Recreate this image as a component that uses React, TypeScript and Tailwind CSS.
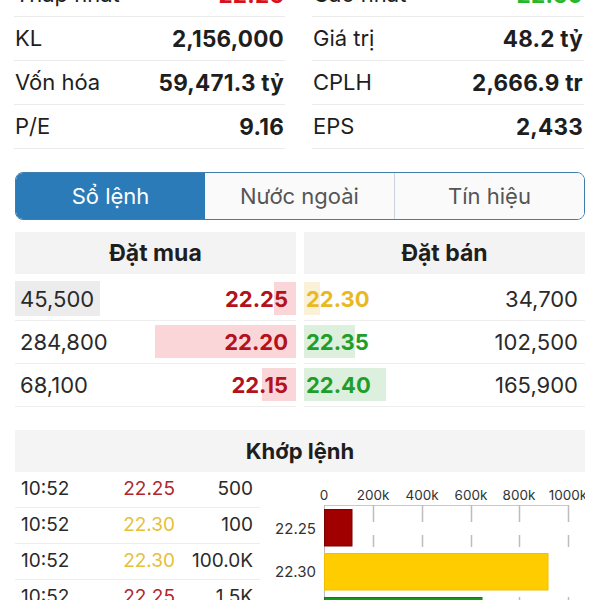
import React from "react";

const font = { fontFamily: 'Inter, "Noto Sans", sans-serif' };

type Stat = { label: string; value: string; color?: string };

const leftStats: Stat[] = [
  { label: "Thấp nhất", value: "22.25", color: "text-[#d9111b]" },
  { label: "KL", value: "2,156,000" },
  { label: "Vốn hóa", value: "59,471.3 tỷ" },
  { label: "P/E", value: "9.16" },
];
const rightStats: Stat[] = [
  { label: "Cao nhất", value: "22.50", color: "text-[#25b82a]" },
  { label: "Giá trị", value: "48.2 tỷ" },
  { label: "CPLH", value: "2,666.9 tr" },
  { label: "EPS", value: "2,433" },
];

function StatCol({ items }: { items: Stat[] }) {
  return (
    <div className="flex flex-col">
      {items.map((s) => (
        <div
          key={s.label}
          className="h-[44px] flex items-center justify-between border-b border-[#ebebeb] pl-[1px] pr-[1px]"
        >
          <span className="text-[22px] text-[#1e1e1e]">{s.label}</span>
          <span className={`text-[22.5px] font-bold tracking-[0.01em] ${s.color ?? "text-[#1e1e1e]"}`}>{s.value}</span>
        </div>
      ))}
    </div>
  );
}

const buys = [
  { vol: "45,500", price: "22.25", bar: 22, flash: true },
  { vol: "284,800", price: "22.20", bar: 141, flash: false },
  { vol: "68,100", price: "22.15", bar: 34, flash: false },
];
const sells = [
  { price: "22.30", vol: "34,700", bar: 16, text: "text-[#e8b923]", bg: "bg-[#fbf0d8]" },
  { price: "22.35", vol: "102,500", bar: 51, text: "text-[#1f9e2b]", bg: "bg-[#ddf0de]" },
  { price: "22.40", vol: "165,900", bar: 82, text: "text-[#1f9e2b]", bg: "bg-[#ddf0de]" },
];

const trades = [
  { t: "10:52", p: "22.25", v: "500", c: "text-[#b0262e]" },
  { t: "10:52", p: "22.30", v: "100", c: "text-[#e6c03a]" },
  { t: "10:52", p: "22.30", v: "100.0K", c: "text-[#e6c03a]" },
  { t: "10:52", p: "22.25", v: "1.5K", c: "text-[#b0262e]" },
];

function Chart() {
  const ticks = [64, 113, 162, 211, 259, 308];
  const labels = ["0", "200k", "400k", "600k", "800k", "1000k"];
  return (
    <svg width="325" height="130" viewBox="0 0 325 130" className="block">
      <g fontFamily='Inter, "Noto Sans", sans-serif' fill="#333">
        {labels.map((l, i) => (
          <text key={l} x={ticks[i]} y={28} fontSize="13.5" textAnchor="middle">
            {l}
          </text>
        ))}
        <text x={56} y={62} fontSize="15" textAnchor="end">22.25</text>
        <text x={56} y={105} fontSize="15" textAnchor="end">22.30</text>
      </g>
      <line x1={64} y1={33.5} x2={308} y2={33.5} stroke="#c8c8c8" strokeWidth="1" />
      {ticks.slice(1).map((x) => (
        <line
          key={x}
          x1={x + 0.5}
          y1={33}
          x2={x + 0.5}
          y2={130}
          stroke="#bdbdbd"
          strokeWidth="1.5"
          strokeDasharray="17 13 12 50"
        />
      ))}
      <line x1={64.5} y1={33} x2={64.5} y2={130} stroke="#bdbdbd" strokeWidth="1" />
      <rect x={64.5} y={37.5} width={27.5} height={36.5} fill="#a10000" stroke="#7c0000" strokeWidth="1" />
      <rect x={64.5} y={81.5} width={223.5} height={36.5} fill="#ffcc00" stroke="#f0c000" strokeWidth="1" />
      <rect x={64.5} y={125.5} width={157.5} height={20} fill="#149a14" stroke="#0c800c" strokeWidth="1" />
    </svg>
  );
}

export default function App() {
  return (
    <div className="w-[600px] h-[600px] overflow-hidden bg-white" style={font}>
      <div className="-mt-[27px] pl-[14px] grid grid-cols-[271px_272px] gap-x-[27px]">
        <StatCol items={leftStats} />
        <StatCol items={rightStats} />
      </div>

      {/* segmented control */}
      <div className="mt-[23px] ml-[15px] w-[570px] h-[48px] flex rounded-[8px] border border-[#3f7fae] overflow-hidden">
        <div className="w-[189px] bg-[#2b7bb9] flex items-center justify-center text-[22px] text-white">
          Sổ lệnh
        </div>
        <div className="w-[190px] bg-[#fafafa] border-r border-[#c9d2da] flex items-center justify-center text-[22px] text-[#555]">
          Nước ngoài
        </div>
        <div className="flex-1 bg-[#fafafa] flex items-center justify-center text-[22px] text-[#555]">
          Tín hiệu
        </div>
      </div>

      {/* order book */}
      <div className="mt-[12px] ml-[15px] w-[570px] grid grid-cols-[281px_281px] gap-x-[8px]">
        <div>
          <div className="h-[42px] bg-[#f3f3f3] flex items-center justify-center text-[23px] font-bold text-[#1e1e1e]">
            Đặt mua
          </div>
          <div className="mt-[4px]">
            {buys.map((b) => (
              <div key={b.price} className="relative h-[43px] border-b border-[#eeeeee]">
                {b.flash && (
                  <div className="absolute left-0 top-[3px] bottom-[4px] w-[85px] bg-[#ececec]" />
                )}
                <div
                  className="absolute right-0 top-[4px] bottom-[5px] bg-[#fbd6d9]"
                  style={{ width: b.bar }}
                />
                <div className="relative h-full flex items-center justify-between pl-[5px] pr-[8px]">
                  <span className="text-[22px] text-[#2a2a2a]">{b.vol}</span>
                  <span className="text-[22px] font-bold text-[#b3121c]">{b.price}</span>
                </div>
              </div>
            ))}
          </div>
        </div>
        <div>
          <div className="h-[42px] bg-[#f3f3f3] flex items-center justify-center text-[23px] font-bold text-[#1e1e1e]">
            Đặt bán
          </div>
          <div className="mt-[4px]">
            {sells.map((s) => (
              <div key={s.price} className="relative h-[43px] border-b border-[#eeeeee]">
                <div
                  className={`absolute left-0 top-[4px] bottom-[5px] ${s.bg}`}
                  style={{ width: s.bar }}
                />
                <div className="relative h-full flex items-center justify-between pl-[2px] pr-[7px]">
                  <span className={`text-[22px] font-bold ${s.text}`}>{s.price}</span>
                  <span className="text-[22px] text-[#2a2a2a]">{s.vol}</span>
                </div>
              </div>
            ))}
          </div>
        </div>
      </div>

      {/* matched orders */}
      <div className="mt-[23px] ml-[15px] w-[570px] h-[42px] bg-[#f4f4f4] flex items-center justify-center text-[22px] font-bold text-[#1e1e1e]">
        Khớp lệnh
      </div>
      <div className="flex">
        <div className="ml-[15px] w-[245px]">
          {trades.map((r, i) => (
            <div key={i} className="h-[36px] border-b border-[#eeeeee] flex items-center pl-[6px] pr-[7px] text-[19px]">
              <span className="w-[100px] text-[#2a2a2a]">{r.t}</span>
              <span className={`w-[54px] text-right ${r.c}`}>{r.p}</span>
              <span className="flex-1 text-right text-[#2a2a2a]">{r.v}</span>
            </div>
          ))}
        </div>
        <Chart />
      </div>
    </div>
  );
}
